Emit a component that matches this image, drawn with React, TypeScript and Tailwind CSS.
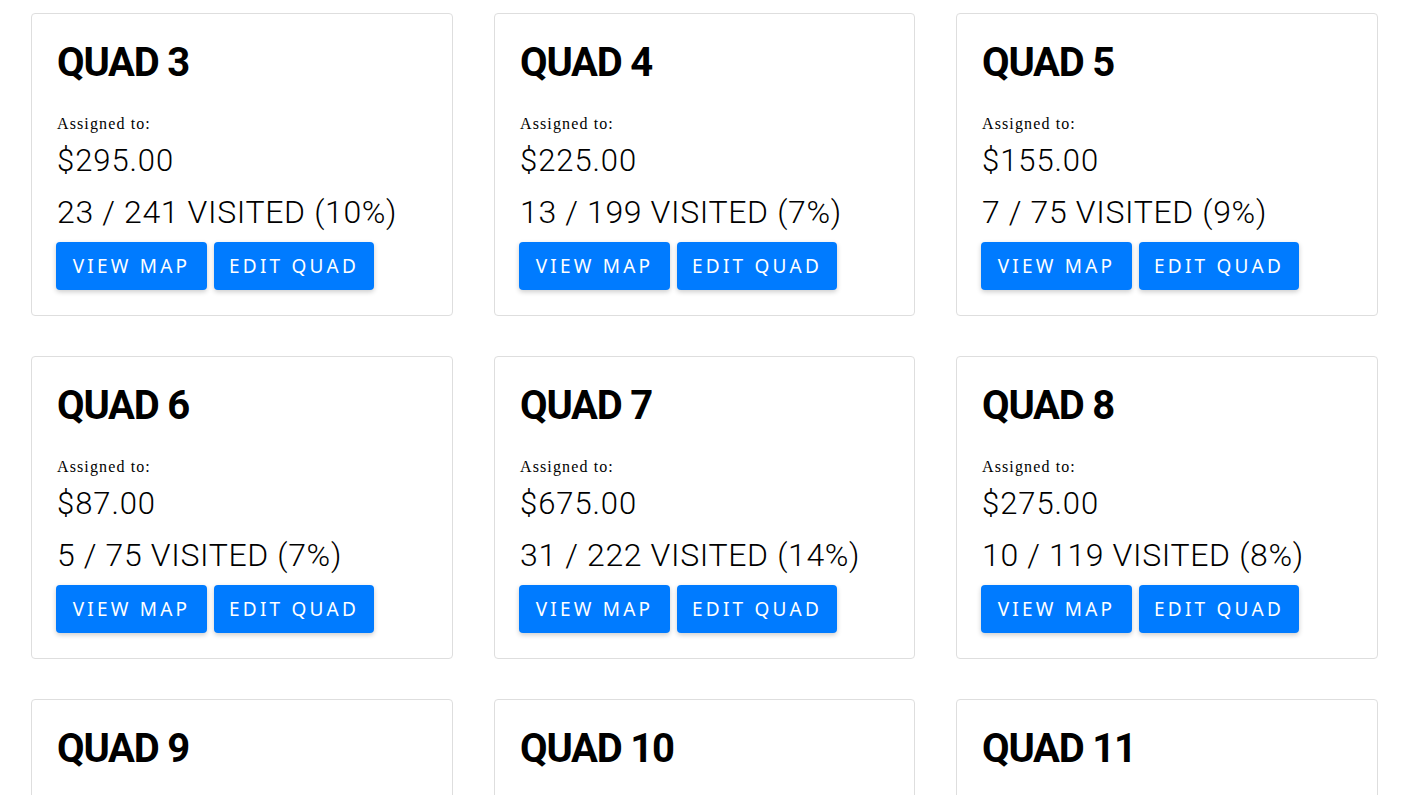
const quads = [
  { name: "QUAD 3", amount: "$295.00", visited: "23 / 241 VISITED (10%)" },
  { name: "QUAD 4", amount: "$225.00", visited: "13 / 199 VISITED (7%)" },
  { name: "QUAD 5", amount: "$155.00", visited: "7 / 75 VISITED (9%)" },
  { name: "QUAD 6", amount: "$87.00", visited: "5 / 75 VISITED (7%)" },
  { name: "QUAD 7", amount: "$675.00", visited: "31 / 222 VISITED (14%)" },
  { name: "QUAD 8", amount: "$275.00", visited: "10 / 119 VISITED (8%)" },
  { name: "QUAD 9", amount: "$0.00", visited: "0 / 0 VISITED (0%)" },
  { name: "QUAD 10", amount: "$0.00", visited: "0 / 0 VISITED (0%)" },
  { name: "QUAD 11", amount: "$0.00", visited: "0 / 0 VISITED (0%)" },
];

function QuadCard({ name, amount, visited }: { name: string; amount: string; visited: string }) {
  return (
    <div className="h-[303px] rounded-[4px] border border-[#dedede] bg-white px-[25px] pt-[25px]">
      <h2 className="font-['Roboto',sans-serif] text-[40px] font-bold leading-[48px] tracking-[-0.03em] text-black">
        {name}
      </h2>
      <div className="mt-[28px] font-['Liberation_Serif',serif] text-[16px] leading-[18px] tracking-[0.07em] text-black">
        Assigned to:
      </div>
      <div className="mt-[9px] whitespace-nowrap font-['Roboto',sans-serif] text-[31px] font-light leading-[38px] tracking-[0.03em] text-black">
        {amount}
      </div>
      <div className="mt-[13px] whitespace-nowrap font-['Roboto',sans-serif] text-[32px] font-light leading-[38px] tracking-[0.02em] text-black">
        {visited}
      </div>
      <div className="-ml-px mt-[11px] flex gap-[7px]">
        <button className="h-[48px] w-[151px] rounded-[4px] bg-[#007bff] font-['Noto_Sans',sans-serif] text-[19px] tracking-[0.17em] text-white shadow-[0_2px_5px_rgba(0,0,0,0.2)]">
          VIEW MAP
        </button>
        <button className="h-[48px] w-[160px] rounded-[4px] bg-[#007bff] font-['Noto_Sans',sans-serif] text-[19px] tracking-[0.17em] text-white shadow-[0_2px_5px_rgba(0,0,0,0.2)]">
          EDIT QUAD
        </button>
      </div>
    </div>
  );
}

export default function App() {
  return (
    <div className="min-h-screen bg-white px-[31px] pt-[13px]">
      <div className="grid grid-cols-[422px_421px_422px] gap-x-[41px] gap-y-[40px]">
        {quads.map((q) => (
          <QuadCard key={q.name} {...q} />
        ))}
      </div>
    </div>
  );
}
